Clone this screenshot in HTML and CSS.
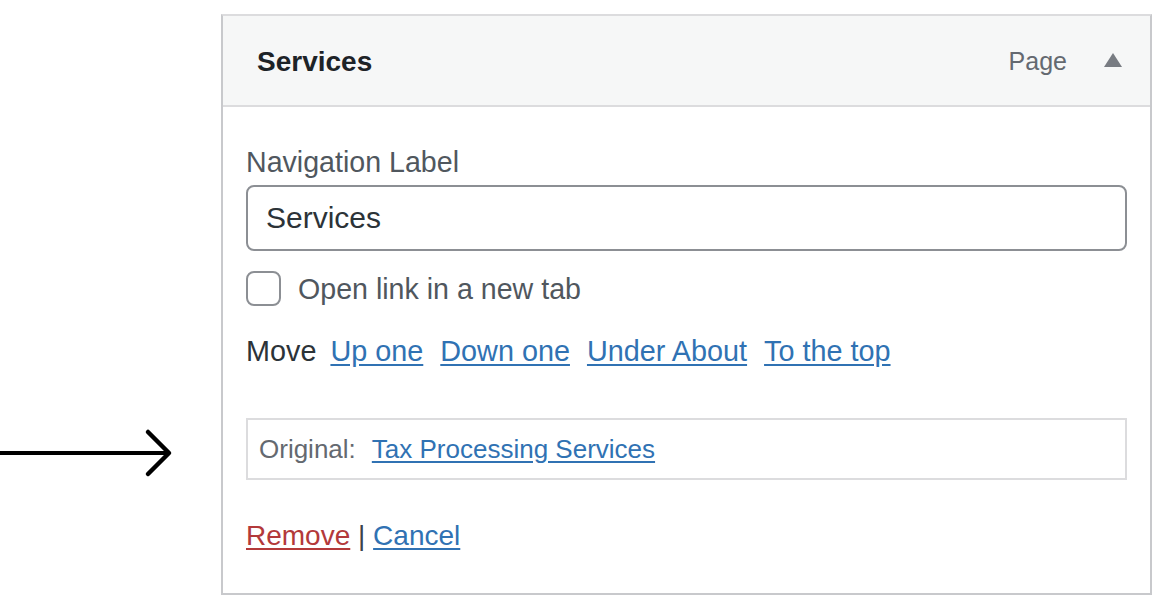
FILE: index.html
```
<!DOCTYPE html>
<html lang="en">
<head>
    <meta charset="UTF-8">
    <title>Menu item - Services</title>
    <link rel="stylesheet" href="styles.css">
</head>
<body>

    <div class="page">
        <div class="pointer">
            <svg width="175" height="50" viewBox="0 0 175 50">
                <path d="M0 25 H169" stroke="#000" stroke-width="4" fill="none"/>
                <path d="M148 4 L169 25 L148 46" stroke="#000" stroke-width="4.5" fill="none" stroke-linecap="round" stroke-linejoin="round"/>
            </svg>
        </div>

        <div class="menu-item">
            <div class="item-bar">
                <span class="item-title">Services</span>
                <span class="item-controls">
                    <span class="item-type">Page</span>
                    <span class="item-toggle"></span>
                </span>
            </div>

            <div class="item-settings">
                <label class="field-label" for="navLabel">Navigation Label</label>
                <input type="text" id="navLabel" class="text-input" value="Services">

                <label class="check-row">
                    <span class="checkbox"></span>
                    <span>Open link in a new tab</span>
                </label>

                <div class="move-row">
                    <span class="move-label">Move</span>
                    <a href="#">Up one</a>
                    <a href="#">Down one</a>
                    <a href="#">Under About</a>
                    <a href="#">To the top</a>
                </div>

                <div class="original">
                    <span class="original-label">Original:</span>
                    <a href="#">Tax Processing Services</a>
                </div>

                <div class="actions">
                    <a href="#" class="remove">Remove</a> | <a href="#">Cancel</a>
                </div>
            </div>
        </div>
    </div>

</body>
</html>
```

FILE: styles.css
```
body {
    margin: 0;
    background: #fff;
    font-family: 'Liberation Sans', Arial, sans-serif;
    color: #50575e;
}

.page {
    display: flex;
    align-items: flex-start;
}

.pointer {
    width: 221px;
    flex-shrink: 0;
    padding-top: 428px;
}

.pointer svg {
    display: block;
}

.menu-item {
    width: 927px;
    margin-top: 14px;
    border: 2px solid #c8c9cc;
    border-top-color: #dcdcde;
}

.item-bar {
    height: 89px;
    background: #f6f7f7;
    border-bottom: 2px solid #dcdcde;
    display: flex;
    align-items: center;
    justify-content: space-between;
    padding: 0 28px 0 34px;
}

.item-title {
    font-size: 28px;
    font-weight: bold;
    color: #1d2327;
    margin-top: 2px;
}

.item-controls {
    display: flex;
    align-items: center;
    gap: 37px;
}

.item-type {
    font-size: 25px;
    color: #646970;
    margin-top: 2px;
}

.item-toggle {
    width: 0;
    height: 0;
    border-left: 9px solid transparent;
    border-right: 9px solid transparent;
    border-bottom: 14px solid #787c82;
    margin-top: -2px;
}

.item-settings {
    padding: 37px 23px 39px 23px;
}

.field-label {
    display: block;
    font-size: 28.6px;
    line-height: 36px;
    color: #50575e;
}

.text-input {
    display: block;
    width: 100%;
    height: 66px;
    box-sizing: border-box;
    margin-top: 5px;
    padding: 0 18px;
    border: 2px solid #8c8f94;
    border-radius: 8px;
    font-family: inherit;
    font-size: 30px;
    color: #2c3338;
    background: #fff;
}

.check-row {
    display: flex;
    align-items: center;
    gap: 17px;
    margin-top: 20px;
    font-size: 28.6px;
    line-height: 34px;
    color: #50575e;
}

.checkbox {
    width: 31px;
    height: 31px;
    border: 2px solid #8c8f94;
    border-radius: 8px;
    background: #fff;
}

.move-row {
    display: flex;
    gap: 17px;
    margin-top: 27px;
    font-size: 28.8px;
    line-height: 36px;
}

.move-label {
    color: #2c3338;
    margin-right: -3px;
}

a {
    color: #3072b3;
    text-decoration: underline;
    text-underline-offset: 3px;
}

.original {
    display: flex;
    align-items: center;
    gap: 16px;
    height: 58px;
    margin-top: 49px;
    padding: 0 11px;
    border: 2px solid #dcdcde;
    font-size: 26px;
}

.original-label {
    color: #646970;
}

.actions {
    margin-top: 38px;
    font-size: 28px;
    line-height: 36px;
    color: #3c434a;
}

.actions .remove {
    color: #b3393a;
}
```
